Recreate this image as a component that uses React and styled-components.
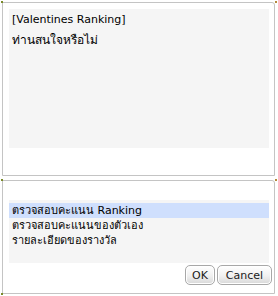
import styled, { createGlobalStyle } from "styled-components";

const GlobalStyle = createGlobalStyle`
  html, body {
    margin: 0;
    padding: 0;
    background: #ffffff;
  }
  body {
    font-family: "DejaVu Sans", "Noto Sans", sans-serif;
    font-size: 11px;
    color: #000000;
  }
`;

const items = [
  "ตรวจสอบคะแนน Ranking",
  "ตรวจสอบคะแนนของตัวเอง",
  "รายละเอียดของรางวัล",
];

const App = () => {
  return (
    <>
      <GlobalStyle />
      <Frame>
        <Panel $height={174}>
          <Message>
            <Line>[Valentines Ranking]</Line>
            <Line $thai>ท่านสนใจหรือไม่</Line>
          </Message>
          <Dot $corner="tl" />
          <Dot $corner="tr" />
        </Panel>
        <Panel $height={114}>
          <ListBox>
            {items.map((item, i) => (
              <Item key={item} $selected={i === 0}>
                {item}
              </Item>
            ))}
          </ListBox>
          <Buttons>
            <Button $width={30}>OK</Button>
            <Button $width={55}>Cancel</Button>
          </Buttons>
          <Dot $corner="tl" />
          <Dot $corner="tr" />
          <Dot $corner="bl" />
        </Panel>
      </Frame>
    </>
  );
};

export default App;

const Frame = styled.div`
  width: 278px;
  height: 296px;
  padding: 2px 3px 2px 2px;
  box-sizing: border-box;
  display: flex;
  flex-direction: column;
  gap: 4px;
`;

const Panel = styled.div`
  position: relative;
  height: ${(p) => p.$height}px;
  box-sizing: border-box;
  border: 1px solid #c4c4c4;
  border-radius: 0 3px 0 0;
  background: #ffffff;
  display: flex;
  flex-direction: column;
  padding: 6px 5px 6px 6px;
`;

const Dot = styled.span`
  position: absolute;
  width: 2px;
  height: 2px;
  background: ${(p) => (p.$corner === "tr" ? "#b48a3c" : "#7a8a2a")};
  top: ${(p) => (p.$corner === "bl" ? "auto" : "-2px")};
  bottom: ${(p) => (p.$corner === "bl" ? "-2px" : "auto")};
  left: ${(p) => (p.$corner === "tr" ? "auto" : "-2px")};
  right: ${(p) => (p.$corner === "tr" ? "-3px" : "auto")};
`;

const Message = styled.div`
  height: 139px;
  background: #f5f5f5;
  padding: 3px 3px;
  box-sizing: border-box;
  display: flex;
  flex-direction: column;
  gap: 4px;
`;

const Line = styled.div`
  line-height: 16px;
  font-size: ${(p) => (p.$thai ? "12px" : "11px")};
  white-space: nowrap;
`;

const ListBox = styled.div`
  margin-top: 13px;
  height: 63px;
  background: #f5f5f5;
  padding: 3px 0 0 0;
  box-sizing: border-box;
`;

const Item = styled.div`
  height: 15px;
  line-height: 15px;
  padding-left: 3px;
  white-space: nowrap;
  background: ${(p) => (p.$selected ? "#cfdffd" : "transparent")};
`;

const Buttons = styled.div`
  margin-top: auto;
  margin-right: -3px;
  margin-bottom: 2px;
  display: flex;
  justify-content: flex-end;
  gap: 2px;
`;

const Button = styled.button`
  width: ${(p) => p.$width}px;
  height: 20px;
  padding: 0;
  font-family: "DejaVu Sans", sans-serif;
  font-size: 11px;
  color: #1a1a1a;
  border: 1px solid #a8a8a8;
  border-radius: 5px;
  background: linear-gradient(#ffffff, #f0f0f0 55%, #d8d8d8);
  box-shadow: inset 0 0 0 1px #ffffff;
`;
